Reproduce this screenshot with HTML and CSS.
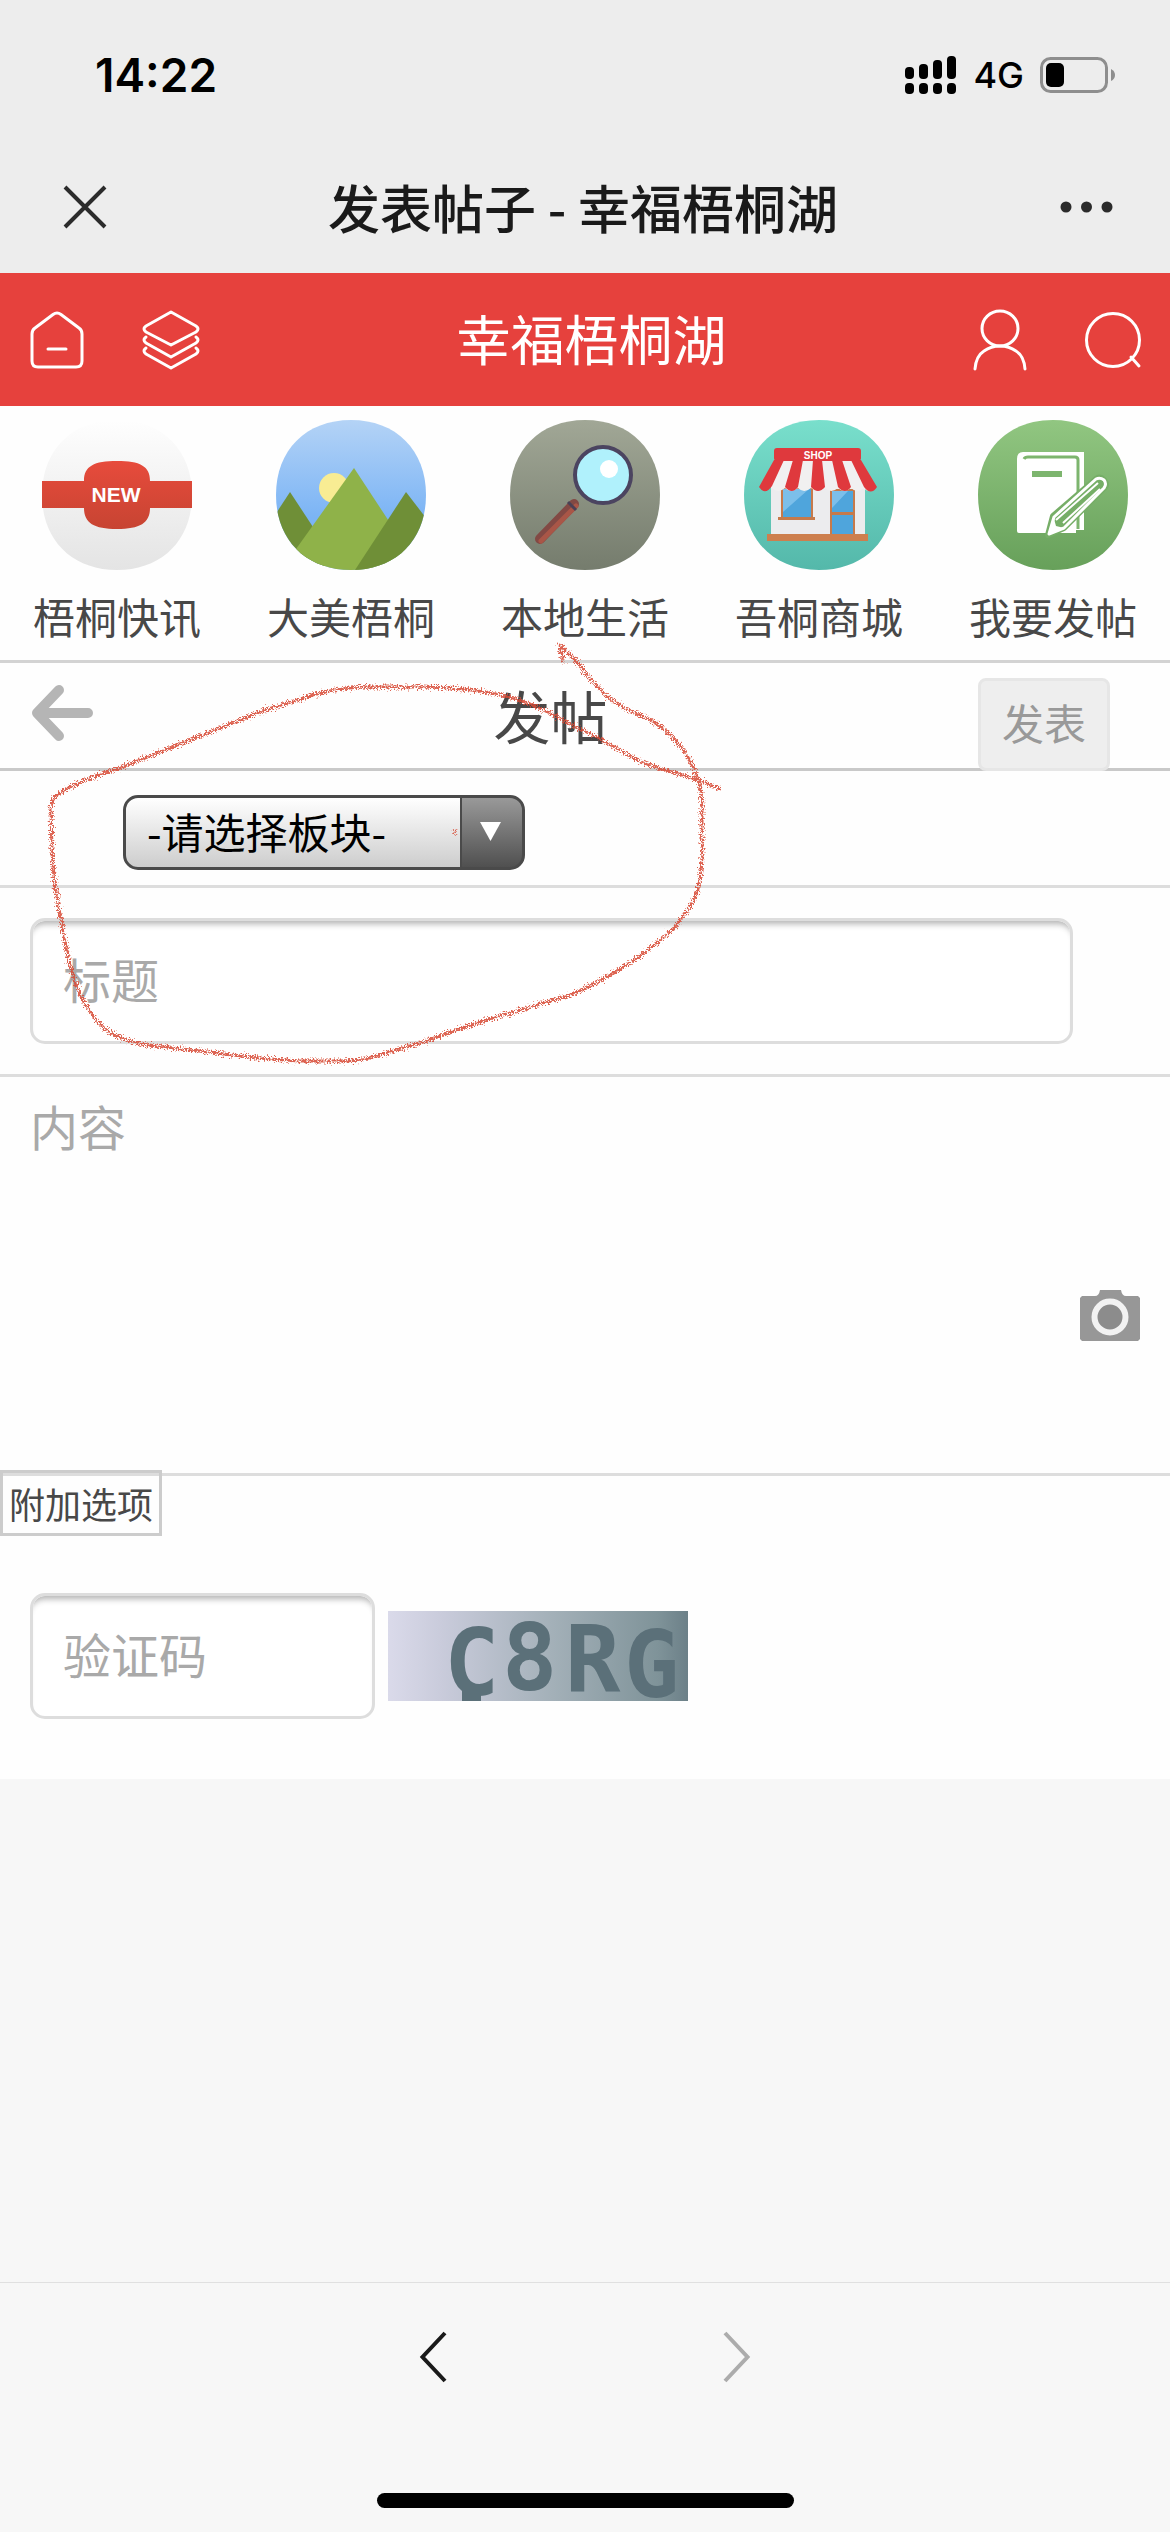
FILE: index.html
```html
<!DOCTYPE html>
<html lang="zh-CN">
<head>
<meta charset="utf-8">
<meta name="viewport" content="width=device-width">
<title>发表帖子 - 幸福梧桐湖</title>
<link rel="stylesheet" href="styles.css">
</head>
<body>
<div class="status">
  <time class="clock">14:22</time>
  <div class="status-right">
    <svg class="signal" viewBox="0 0 52 38" aria-hidden="true">
      <rect x="0" y="11" width="9" height="12" rx="4"/><rect x="14" y="8" width="9" height="15" rx="4"/><rect x="28" y="4" width="9" height="19" rx="4"/><rect x="42" y="0" width="9" height="23" rx="4"/>
      <rect x="0" y="27" width="9" height="11" rx="4"/><rect x="14" y="27" width="9" height="11" rx="4"/><rect x="28" y="27" width="9" height="11" rx="4"/><rect x="42" y="27" width="9" height="11" rx="4"/>
    </svg>
    <span class="network">4G</span>
    <svg class="battery" viewBox="0 0 75 36" aria-hidden="true">
      <rect x="1.500" y="1.500" width="65" height="33" rx="9" fill="none" stroke="#8e8e8e" stroke-width="3"/>
      <rect x="6" y="6" width="18" height="24" rx="5"/>
      <path d="M71 12q4 2 4 6t-4 6z" fill="#8e8e8e"/>
    </svg>
  </div>
</div>
<div class="titlebar">
  <button class="plain" type="button" aria-label="关闭"><svg width="42" height="42" viewBox="0 0 42 42"><path d="M1 1l40 40M41 1L1 41" stroke="#2b2b2b" stroke-width="4"/></svg></button>
  <span class="page-title">发表帖子 - 幸福梧桐湖</span>
  <button class="plain" type="button" aria-label="更多"><svg width="53" height="12" viewBox="0 0 53 12" fill="#2b2b2b"><circle cx="6" cy="6" r="5.500"/><circle cx="26.500" cy="6" r="5.500"/><circle cx="47" cy="6" r="5.500"/></svg></button>
</div>
<header class="site">
  <div class="site-links">
    <a href="#" aria-label="首页"><svg width="54" height="58" viewBox="0 0 54 58"><path d="M2 23q0-4 3-6L23 3.500q4-3 8 0L49 17q3 2 3 6v27q0 6-6 6H8q-6 0-6-6zM18 38h18"/></svg></a>
    <a href="#" aria-label="版块"><svg width="58" height="60" viewBox="0 0 58 60"><path d="M29 2L54 16q4 3 0 6L29 35 4 22q-4-3 0-6zM4 27q-4 3 0 6L29 47 54 33q4-3 0-6M4 38q-4 3 0 6L29 58 54 44q4-3 0-6"/></svg></a>
  </div>
  <h1 class="site-name">幸福梧桐湖</h1>
  <div class="site-links end">
    <a href="#" aria-label="我的"><svg width="54" height="61" viewBox="0 0 54 61"><ellipse cx="27" cy="19.500" rx="18" ry="17.500"/><path d="M2 60Q3 47 11 42 18 37 27 37T43 42Q51 47 52 60"/></svg></a>
    <a href="#" aria-label="搜索"><svg width="56" height="58" viewBox="0 0 56 58"><circle cx="28" cy="29" r="26.500"/><path d="M46 46l8 9"/></svg></a>
  </div>
</header>
<nav class="channels">
  <a href="#">
    <svg viewBox="0 0 150 150"><defs><linearGradient id="g1" x2="0" y2="1"><stop stop-color="#fefefe"/><stop offset="1" stop-color="#e4e4e4"/></linearGradient><linearGradient id="g1r" x2="0" y2="1"><stop stop-color="#e74b3c"/><stop offset="1" stop-color="#c74432"/></linearGradient></defs>
      <path fill="url(#g1)" d="M75 0C120 0 150 30 150 75S120 150 75 150 0 120 0 75 30 0 75 0Z"/>
      <path fill="url(#g1r)" d="M0 61H42C42 46 52 41 75 41S108 46 108 61H150V88H108C108 103 98 109 75 109S42 103 42 88H0Z"/>
      <text class="new" x="74" y="82" text-anchor="middle">NEW</text></svg>
    <span>梧桐快讯</span></a>
  <a href="#">
    <svg viewBox="0 0 150 150"><defs><linearGradient id="g2" x2="0" y2="1"><stop stop-color="#b4d3f6"/><stop offset=".65" stop-color="#7bb4f5"/></linearGradient><clipPath id="sq"><path d="M75 0C120 0 150 30 150 75S120 150 75 150 0 120 0 75 30 0 75 0Z"/></clipPath></defs>
      <g clip-path="url(#sq)"><path fill="url(#g2)" d="M0 0h150v150H0z"/><circle cx="58" cy="68" r="15" fill="#f8ec93"/>
      <path fill="#6f8f37" d="M14 72L60 142 10 160-20 124z"/><path fill="#8fb249" d="M78 48L145 150H5z"/><path fill="#6f8f37" d="M130 72L79 150H190z"/></g></svg>
    <span>大美梧桐</span></a>
  <a href="#">
    <svg viewBox="0 0 150 150"><defs><linearGradient id="g3" x2="0" y2="1"><stop stop-color="#a1a796"/><stop offset="1" stop-color="#757c6d"/></linearGradient></defs>
      <path fill="url(#g3)" d="M75 0C120 0 150 30 150 75S120 150 75 150 0 120 0 75 30 0 75 0Z"/>
      <path d="M64 84L30 119" stroke="#824944" stroke-width="10" stroke-linecap="round"/><path d="M66 86L31 121" stroke="#a95647" stroke-width="5" stroke-linecap="round"/><path d="M58 82l8 8" stroke="#4b4055" stroke-width="3"/>
      <circle cx="93" cy="55" r="28" fill="#b0f1fc" stroke="#4b4460" stroke-width="4"/><circle cx="99" cy="49" r="9" fill="#fff"/></svg>
    <span>本地生活</span></a>
  <a href="#">
    <svg viewBox="0 0 150 150"><defs><linearGradient id="g4" x2="0" y2="1"><stop stop-color="#79dfcc"/><stop offset="1" stop-color="#54b8aa"/></linearGradient></defs>
      <path fill="url(#g4)" d="M75 0C120 0 150 30 150 75S120 150 75 150 0 120 0 75 30 0 75 0Z"/>
      <path fill="#ececee" d="M27 60h94v55H27z"/>
      <path fill="#4fa5dc" stroke="#c67a4b" stroke-width="2" d="M38 68h30v30H38zM87 70h23v45H87z"/><path fill="#7cbfea" d="M39 69h26L39 92zM88 71h16L88 88z"/><path stroke="#c67a4b" stroke-width="3" d="M34 98.500h37M87 93.500h23"/><path fill="#cd7f4e" d="M23 114h101v7H23z"/>
      <path fill="#f1f0f0" d="M34 40h80l16 28q-6 6-10 0-7 6-13 0-7 6-13 0-7 6-13 0-7 6-14 0-7 6-13 0-7 6-13 0-7 6-13 0z"/>
      <path fill="#df393d" d="M30 40h10L28 66q-7 10-13 1zM49 40h10L54 67q-6 8-13 0zM69 40h9l3 27q-7 8-14 0zM88 40h10l9 27q-6 8-13 0zM107 40h10l16 27q-6 9-13 0z"/>
      <rect x="30" y="28" width="87" height="13" rx="3" fill="#df393d"/><text class="shop" x="74" y="39" text-anchor="middle">SHOP</text></svg>
    <span>吾桐商城</span></a>
  <a href="#">
    <svg viewBox="0 0 150 150"><defs><linearGradient id="g5" x2="0" y2="1"><stop stop-color="#91c681"/><stop offset="1" stop-color="#67a05a"/></linearGradient></defs>
      <path fill="url(#g5)" d="M75 0C120 0 150 30 150 75S120 150 75 150 0 120 0 75 30 0 75 0Z"/>
      <path fill="#fff" d="M45 32h61v78h-8v3H41q-2 0-2-2V39q0-7 6-7z"/><path d="M46 39q1-2 4-2h47q3 0 3 3v69" fill="none" stroke="#7db56e" stroke-width="3"/><path fill="#7db56e" d="M54 51h30v6H54z"/>
      <path d="M70 115l5-19 43-37q4-3 8 1 4 5 0 8L86 108z" fill="#76ae67" stroke="#76ae67" stroke-width="6" stroke-linejoin="round"/>
      <path d="M71 114l5-17 42-38q4-2 8 1 3 4 0 8L86 108z" fill="#76ae67" stroke="#fff" stroke-width="3" stroke-linejoin="round"/><path d="M71 114l5-15 2 7 8 2z" fill="#fff"/><path d="M78 100l42-37M85 103l37-34" stroke="#fff" stroke-width="2"/></svg>
    <span>我要发帖</span></a>
</nav>
<main>
<form class="post" onsubmit="return false">
  <div class="post-bar">
    <button class="plain back" type="button" aria-label="返回"><svg width="63" height="58" viewBox="0 0 63 58"><path d="M29 6L7 29l22 23M10 29h48" fill="none" stroke="#b5b5b5" stroke-width="10" stroke-linecap="round" stroke-linejoin="round"/></svg></button>
    <h2>发帖</h2>
    <button class="submit" type="submit">发表</button>
  </div>
  <div class="row board">
    <div class="select-wrap">
      <select aria-label="板块"><option>-请选择板块-</option></select>
      <svg class="caret" width="21" height="19" viewBox="0 0 21 19" aria-hidden="true"><path fill="#fff" d="M0 0h21L10.500 19z"/></svg>
    </div>
  </div>
  <div class="row subject"><input class="field" type="text" placeholder="标题" aria-label="标题"></div>
  <div class="row content">
    <textarea placeholder="内容" aria-label="内容"></textarea>
    <button class="plain camera" type="button" aria-label="添加图片"><svg width="60" height="51" viewBox="0 0 60 51"><path fill="#979797" d="M2 6h13q4 0 5-6h21q1 6 5 6h12l2 2v41l-2 2H2l-2-2V8z"/><circle cx="30" cy="27" r="15.500" fill="#8c8c8c" stroke="#f2f2f2" stroke-width="6"/></svg></button>
  </div>
  <button class="options" type="button">附加选项</button>
  <div class="verify">
    <input class="field" type="text" placeholder="验证码" aria-label="验证码">
    <svg class="captcha" viewBox="0 0 300 90" role="img" aria-label="验证码图片"><defs><linearGradient id="cap"><stop stop-color="#dadaea"/><stop offset=".18" stop-color="#c9cbdb"/><stop offset=".55" stop-color="#a3b0b8"/><stop offset=".9" stop-color="#7f9399"/><stop offset="1" stop-color="#6c8088"/></linearGradient></defs>
      <path fill="url(#cap)" d="M0 0h300v90H0z"/><text x="56 114 177 236" y="84 79 81 86">C8RG</text><path fill="#5b7079" d="M74 80h19v10H74z"/></svg>
  </div>
</form>
</main>
<footer class="browser">
  <div class="history">
    <button class="plain" type="button" aria-label="后退"><svg width="27" height="52" viewBox="0 0 27 52"><path d="M25 2L2.500 26 25 50" fill="none" stroke="#1a1a1a" stroke-width="4"/></svg></button>
    <button class="plain" type="button" aria-label="前进"><svg width="27" height="52" viewBox="0 0 27 52"><path d="M2 2l22.500 24L2 50" fill="none" stroke="#acacac" stroke-width="4"/></svg></button>
  </div>
  <div class="home-bar"></div>
</footer>
<!-- hand-drawn note over the form -->
<svg class="scribble" width="740" height="440" viewBox="0 635 740 440" aria-hidden="true">
  <defs><filter id="rough" x="0" y="635" width="740" height="440" filterUnits="userSpaceOnUse"><feTurbulence type="fractalNoise" baseFrequency=".7" numOctaves="2" seed="4"/><feDisplacementMap in="SourceGraphic" scale="10" xChannelSelector="R" yChannelSelector="G"/></filter></defs>
  <g filter="url(#rough)" fill="none" stroke="#d84a34" stroke-width="3" stroke-linecap="round" stroke-linejoin="round" opacity=".85">
    <path d="M563 661L560 645Q575 658 583 670 596 687 612 700 625 709 640 715 662 724 676 741 690 757 697 776 702 788 702 810V850Q702 870 699 885 695 904 672 930 645 955 610 975 590 987 570 995L480 1022 420 1043 380 1055Q362 1061 340 1061H300Q250 1058 200 1051L140 1044Q120 1039 106 1030 86 1012 76 985 68 962 62 925 53 880 52 850L51 810Q51 799 57 795 75 782 120 768L195 738 260 712 320 693Q345 687 370 687H420Q470 687 510 697 540 706 570 724 600 738 630 756 648 766 672 772 700 780 720 789"/>
    <path d="M453 830l3 5M456 830l-2 5" stroke-width="1"/>
  </g>
</svg>
</body>
</html>
```
FILE: styles.css
```css
* { box-sizing: border-box; }
body {
  position: relative;
  display: flex;
  flex-direction: column;
  min-height: 100vh;
  margin: 0;
  background: #f7f7f7;
  color: #484848;
  font-family: "Noto Sans CJK SC", "Noto Sans", sans-serif;
  font-size: 42px;
}
svg { display: block; flex: none; overflow: visible; }
h1, h2 { margin: 0; font-weight: 400; }
a { color: inherit; text-decoration: none; }
button, input, select, textarea { margin: 0; font: inherit; color: inherit; }
.plain { padding: 0; border: 0; background: none; }

.status {
  display: flex;
  align-items: center;
  justify-content: space-between;
  height: 141px;
  padding: 8px 55px 0 95px;
  background: #ededed;
  color: #000;
  font-family: Inter, sans-serif;
}
.clock { font-size: 46px; font-weight: 600; }
.status-right { display: flex; align-items: center; gap: 16px; }
.signal { width: 52px; height: 38px; }
.network { font-size: 36px; font-weight: 500; line-height: 38px; }
.battery { width: 75px; height: 36px; }

.titlebar {
  display: flex;
  align-items: center;
  justify-content: space-between;
  height: 132px;
  padding: 0 57px 0 64px;
  background: #ededed;
}
.page-title {
  color: #1a1a1a;
  font-size: 52px;
  font-weight: 500;
  line-height: 60px;
}

.site {
  display: grid;
  grid-template-columns: 1fr auto 1fr;
  align-items: center;
  height: 133px;
  padding: 0 29px 0 30px;
  background: #e6413d;
  color: #fff;
}
.site-name { padding: 0 0 4px 12px; font-size: 54px; line-height: 66px; }
.site-links { display: flex; align-items: center; gap: 58px; }
.site-links.end { justify-content: flex-end; }
.site-links svg { fill: none; stroke: #fff; stroke-width: 3; stroke-linecap: round; stroke-linejoin: round; }

.channels {
  display: grid;
  grid-template-columns: repeat(5, 1fr);
  padding: 14px 0;
  border-bottom: 3px solid #d3d3d3;
  background: #fefefe;
}
.channels a { display: flex; flex-direction: column; align-items: center; gap: 16px; line-height: 60px; }
.channels svg { width: 150px; height: 150px; }
.new, .shop { fill: #fff; font-family: "Liberation Sans", sans-serif; font-weight: 700; }
.new { font-size: 21px; }
.shop { font-size: 10px; }

.post { padding-bottom: 60px; background: #fefefe; }
.post-bar {
  display: grid;
  grid-template-columns: 1fr auto 1fr;
  align-items: center;
  height: 108px;
  padding: 0 60px 0 30px;
  border-bottom: 3px solid #c9c9c9;
}
.post-bar h2 { padding: 0 39px 4px 0; font-size: 57px; line-height: 66px; }
.back { justify-self: start; margin-bottom: 6px; }
.submit {
  align-self: end;
  justify-self: end;
  width: 132px;
  height: 93px;
  margin-bottom: -3px;
  padding: 0 0 6px;
  border: 3px solid #e6e6e6;
  border-radius: 8px;
  background: #eee;
  color: #999;
}

.row { border-bottom: 3px solid #ddd; }
.board { padding: 24px 30px 15px 123px; }
.select-wrap { position: relative; width: 402px; }
.board select {
  display: block;
  width: 100%;
  height: 75px;
  padding: 0 66px 4px 21px;
  border: 3px solid #4a4a4a;
  border-radius: 15px;
  appearance: none;
  background:
    linear-gradient(#4a4a4a, #4a4a4a) right 60px top / 2px 100% no-repeat,
    linear-gradient(#999, #505050) right / 60px 100% no-repeat,
    linear-gradient(#fff, #cdcdcd);
  color: #000;
}
.caret { position: absolute; top: 27px; right: 24px; pointer-events: none; }

.field {
  display: block;
  width: 100%;
  height: 126px;
  padding: 0 30px 6px;
  border: 3px solid #ddd;
  border-radius: 15px;
  background: #fff;
  box-shadow: inset 0 8px 6px -5px rgba(0, 0, 0, .3);
  font-size: 48px;
}
::placeholder { color: #a9a9a9; opacity: 1; }
.subject { padding: 30px 97px 30px 30px; }

.content { display: flex; height: 399px; padding: 15px 30px; }
.content textarea {
  flex: 1;
  padding: 0;
  border: 0;
  background: none;
  resize: none;
  font-size: 48px;
  line-height: 66px;
}
.camera { align-self: flex-end; margin-bottom: 117px; }

.options {
  position: relative;
  display: block;
  width: 162px;
  height: 66px;
  margin-top: -6px;
  padding: 0;
  border: 3px solid #ccc;
  background: none;
  font-size: 36px;
  line-height: 54px;
}
.verify { display: flex; align-items: center; gap: 13px; margin-top: 57px; padding: 0 30px; }
.verify .field { width: 345px; }
.captcha { width: 300px; height: 90px; }
.captcha text { fill: #5b7079; font-family: "DejaVu Sans Mono", monospace; font-size: 92px; font-weight: 700; }

.browser { margin-top: auto; padding-bottom: 24px; border-top: 1px solid #e0e0e0; }
.history { display: flex; align-items: center; justify-content: center; gap: 276px; height: 148px; }
.home-bar { width: 417px; height: 15px; margin: 62px auto 0; border-radius: 8px; background: #000; }

.scribble { position: absolute; top: 635px; left: 0; pointer-events: none; }
```
